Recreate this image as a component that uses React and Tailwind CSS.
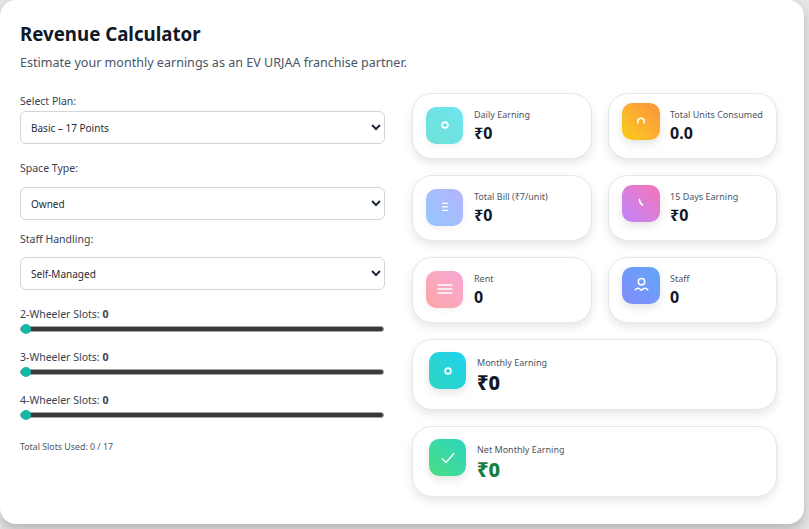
import React from 'react';

const font = { fontFamily: '"Noto Sans", sans-serif' };

const DotIcon = () => (
    <svg width="12" height="12" viewBox="0 0 12 12" fill="none" stroke="white" strokeWidth="1.8">
        <circle cx="6" cy="6" r="2.9" />
    </svg>
);
const ArcIcon = () => (
    <svg width="12" height="12" viewBox="0 0 12 12" fill="none" stroke="white" strokeWidth="1.5">
        <path d="M2.8 8.5V6.5a3.2 3.2 0 0 1 6.4 0V8.5" />
    </svg>
);
const LinesIcon = () => (
    <svg width="12" height="12" viewBox="0 0 12 12" fill="none" stroke="white" strokeWidth="1.3">
        <path d="M3 2.3h6M3 5.8h6M3 9.3h6" />
    </svg>
);
const ClockIcon = () => (
    <svg width="12" height="12" viewBox="0 0 12 12" fill="none" stroke="white" strokeWidth="1.6" strokeLinecap="round">
        <path d="M4.5 2.5C4.5 5 5.5 6.8 7.5 8" />
    </svg>
);
const BarsIcon = () => (
    <svg width="16" height="12" viewBox="0 0 16 12" fill="none" stroke="white" strokeWidth="1.5">
        <path d="M0.5 2h15M0.5 6h15M0.5 10h15" />
    </svg>
);
const UserIcon = () => (
    <svg width="15" height="17" viewBox="0 0 14 16" fill="none" stroke="white" strokeWidth="1.4">
        <circle cx="7" cy="4.5" r="3" />
        <path d="M0.8 12.5C2.5 10 4.5 10 7 12.5C9.5 10 11.5 10 13.2 12.5" />
    </svg>
);
const CheckIcon = () => (
    <svg width="14" height="12" viewBox="0 0 14 12" fill="none" stroke="white" strokeWidth="1.4">
        <path d="M1 6.5L5 10.5L13 1.5" />
    </svg>
);

const Select = ({ label, value, labelClass, options }) => (
    <div>
        <label className={`block text-[10.5px] leading-[15px] text-[#374151] ${labelClass}`}>{label}</label>
        <select
            defaultValue={value}
            className="h-[33px] w-full rounded-md border border-[#d1d5db] bg-white px-[6px] text-[10px] text-[#1f2937]"
            style={font}
        >
            {options.map(o => <option key={o}>{o}</option>)}
        </select>
    </div>
);

const Slider = ({ label }) => (
    <div>
        <label className="block text-[10.5px] leading-[15px] text-[#374151]">
            {label}: <b className="font-bold">0</b>
        </label>
        <input
            type="range"
            min="0"
            max="17"
            defaultValue="0"
            className="block h-[13px] w-[364px] cursor-pointer appearance-none bg-transparent [&::-webkit-slider-runnable-track]:h-[6px] [&::-webkit-slider-runnable-track]:rounded-full [&::-webkit-slider-runnable-track]:border [&::-webkit-slider-runnable-track]:border-[#a3a3a3] [&::-webkit-slider-runnable-track]:bg-[#3a3a3a] [&::-webkit-slider-thumb]:mt-[-3px] [&::-webkit-slider-thumb]:h-[10px] [&::-webkit-slider-thumb]:w-[10px] [&::-webkit-slider-thumb]:appearance-none [&::-webkit-slider-thumb]:rounded-full [&::-webkit-slider-thumb]:bg-[#14b8a6]"
        />
    </div>
);

const StatCard = ({ title, value, gradient, icon, raised, wide, valueClass = 'text-[#111827]' }) => {
    // the right column icons sit a little higher than the left ones
    const iconOffset = wide ? 'mb-2' : raised ? 'mb-[10px]' : 'mb-[2px]';
    return (
        <div className={`flex items-center rounded-[20px] border border-[#e5e7eb] bg-white shadow-[0_4px_10px_rgba(0,0,0,0.1)] ${wide ? 'col-span-2 h-[71px] gap-[11px] pl-[16px]' : 'h-[66px] pl-[13px]'} ${!wide && raised ? 'gap-[10px]' : 'gap-[11px]'}`}>
            <div className={`flex h-[37px] shrink-0 items-center justify-center rounded-[10px] bg-gradient-to-tr ${gradient} ${iconOffset} ${raised ? 'shadow-[0_4px_8px_rgba(0,0,0,0.1)]' : 'shadow-[0_2px_6px_rgba(0,0,0,0.06)]'} ${raised && !wide ? 'w-[38px]' : 'w-[37px]'}`}>
                {icon}
            </div>
            <div>
                <p className={`text-[9px] text-[#4b5563] ${wide ? 'leading-[15px]' : 'leading-[14px]'}`}>{title}</p>
                <p className={`${wide ? 'text-[20px] font-extrabold leading-[25px]' : 'text-[16px] font-bold leading-[22px]'} ${valueClass}`}>{value}</p>
            </div>
        </div>
    );
};

export default function App() {
    return (
        <div className="h-[529px] overflow-hidden bg-[#e5e5e5]" style={font}>
            <div className="h-[524px] w-[804px] rounded-2xl bg-white px-[20px] pt-[21px] shadow-[0_6px_12px_rgba(0,0,0,0.2)]">
                <h1 className="text-[18.7px] font-bold leading-[26px] text-[#111827]">Revenue Calculator</h1>
                <p className="mt-[7px] text-[12.55px] leading-[18px] text-[#4b5563]">
                    Estimate your monthly earnings as an EV URJAA franchise partner.
                </p>

                <div className="mt-[21px] flex gap-[27px]">
                    {/* Form */}
                    <div className="w-[365px] pt-[1px]">
                        <Select label="Select Plan:" value="Basic – 17 Points" labelClass="mb-[2px]" options={['Basic – 17 Points']} />
                        <div className="mt-[17px]">
                            <Select label="Space Type:" value="Owned" labelClass="mb-[11px]" options={['Owned', 'Rented']} />
                        </div>
                        <div className="mt-[12px]">
                            <Select label="Staff Handling:" value="Self-Managed" labelClass="mb-[10px]" options={['Self-Managed', 'Hired']} />
                        </div>
                        <div className="mt-[17px] flex flex-col gap-[15px]">
                            <Slider label="2-Wheeler Slots" />
                            <Slider label="3-Wheeler Slots" />
                            <Slider label="4-Wheeler Slots" />
                        </div>
                        <p className="mt-[19px] text-[8.8px] leading-[14px] text-[#4b5563]">Total Slots Used: 0 / 17</p>
                    </div>

                    {/* Stats */}
                    <div className="grid grid-cols-[180px_169px] gap-x-[16px] gap-y-[16px]">
                        <StatCard title="Daily Earning" value="₹0" gradient="from-[#6ee2d6] to-[#6ee4f0]" icon={<DotIcon />} />
                        <StatCard title="Total Units Consumed" value="0.0" gradient="from-[#facc15] to-[#fb923c]" icon={<ArcIcon />} raised />
                        <StatCard title="Total Bill (₹7/unit)" value="₹0" gradient="from-[#93c5fd] to-[#b4b4fc]" icon={<LinesIcon />} />
                        <StatCard title="15 Days Earning" value="₹0" gradient="from-[#c084fc] to-[#f472b6]" icon={<ClockIcon />} raised />
                        <StatCard title="Rent" value="0" gradient="from-[#fca5a5] to-[#f9a8d4]" icon={<BarsIcon />} />
                        <StatCard title="Staff" value="0" gradient="from-[#818cf8] to-[#60a5fa]" icon={<UserIcon />} raised />
                        <StatCard title="Monthly Earning" value="₹0" gradient="from-[#2dd4bf] to-[#22d3ee]" icon={<DotIcon />} raised wide />
                        <StatCard title="Net Monthly Earning" value="₹0" gradient="from-[#4ade80] to-[#2dd4bf]" icon={<CheckIcon />} raised wide valueClass="text-[#15803d]" />
                    </div>
                </div>
            </div>
        </div>
    );
}
